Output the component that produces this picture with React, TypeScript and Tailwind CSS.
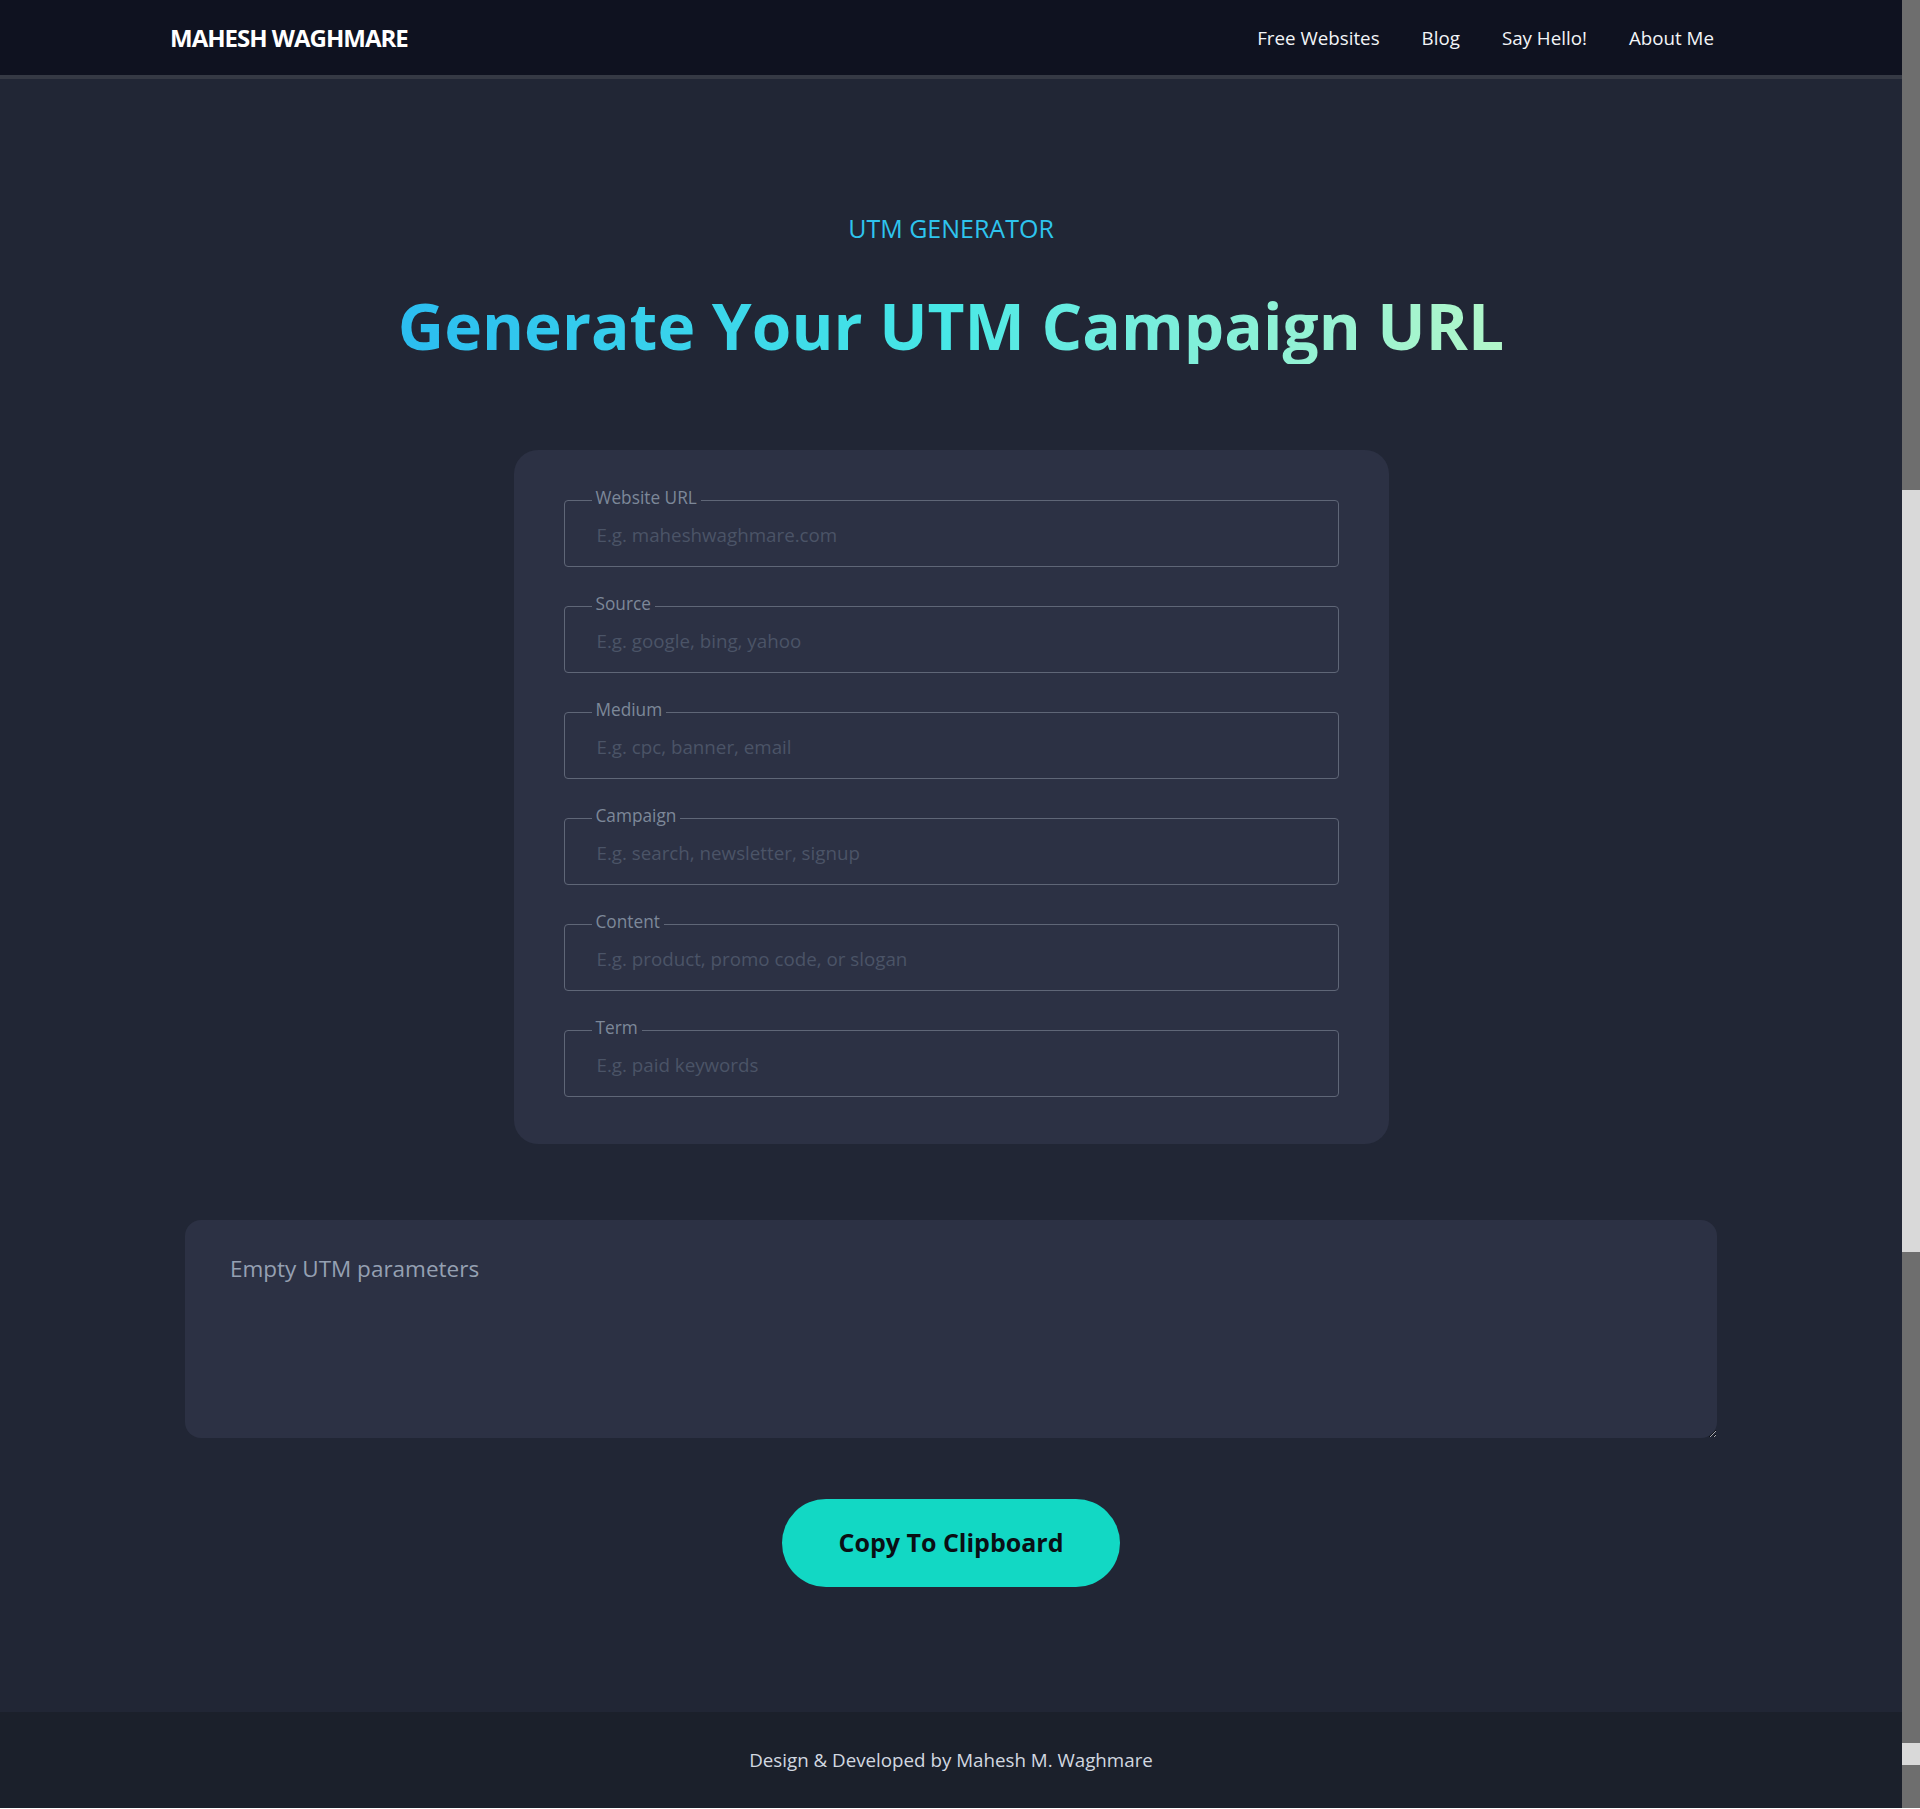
import React from "react";

const fields = [
  { label: "Website URL", placeholder: "E.g. maheshwaghmare.com" },
  { label: "Source", placeholder: "E.g. google, bing, yahoo" },
  { label: "Medium", placeholder: "E.g. cpc, banner, email" },
  { label: "Campaign", placeholder: "E.g. search, newsletter, signup" },
  { label: "Content", placeholder: "E.g. product, promo code, or slogan" },
  { label: "Term", placeholder: "E.g. paid keywords" },
];

const navItems = ["Free Websites", "Blog", "Say Hello!", "About Me"];

export default function App() {
  return (
    <div className="flex w-full font-['Open_Sans',sans-serif] bg-[#212635]">
      <div className="flex-1 flex flex-col min-w-0">
        <header className="h-[79px] bg-[#0f1220] border-b-4 border-[#353944] flex items-center">
          <div className="w-full pl-[170px] pr-[167px] flex items-center justify-between">
            <div className="text-white font-bold text-[24px] tracking-[-1px] leading-none">
              MAHESH WAGHMARE
            </div>
            <nav className="flex items-center">
              {navItems.map((item) => (
                <a
                  key={item}
                  href="#"
                  className="px-[21px] text-[18.75px] text-[#f3f5f8] leading-[24px] pt-[1px]"
                >
                  {item}
                </a>
              ))}
            </nav>
          </div>
        </header>

        <main className="flex flex-col items-center pt-[131px] pb-[125px]">
          <div className="text-[25px] leading-[36px] text-[#2ec4ee]">UTM GENERATOR</div>
          <h1 className="mt-[41px] text-[64px] leading-[77px] font-bold bg-gradient-to-r from-[#2bbdf0] via-[#48e8e6] to-[#b2f7c9] bg-clip-text text-transparent">
            Generate Your UTM Campaign URL
          </h1>

          <div className="mt-[86px] w-[875px] bg-[#2c3144] rounded-3xl px-[50px] pt-[37px] pb-[47px] flex flex-col gap-[26px]">
            {fields.map((f) => (
              <fieldset
                key={f.label}
                className="border border-[#5f6677] rounded-[4px] px-[27px]"
              >
                <legend className="px-[4px] pb-[4px] text-[17.25px] leading-[22px] text-[#7d8899]">
                  {f.label}
                </legend>
                <input
                  type="text"
                  placeholder={f.placeholder}
                  className="block w-full h-[42px] mb-[11px] pl-[5px] bg-transparent outline-none text-[18.75px] text-[#c9d1dc] placeholder:text-[#4b5467]"
                />
              </fieldset>
            ))}
          </div>

          <div className="mt-[76px] w-full px-[185px]">
            <textarea
              readOnly
              defaultValue="Empty UTM parameters"
              className="block w-full h-[218px] bg-[#2c3144] rounded-2xl pt-[32px] pl-[45px] pr-[39px] text-[22.5px] leading-[33px] text-[#95a0b2] outline-none"
            />
          </div>

          <button className="mt-[61px] w-[338px] h-[88px] rounded-full bg-[#12d8c4] text-[#0a0f14] text-[25px] font-bold">
            Copy To Clipboard
          </button>
        </main>

        <footer className="h-[96px] bg-[#1b202b] flex items-center justify-center">
          <span className="text-[18.75px] text-[#d2d8e0]">Design &amp; Developed by Mahesh M. Waghmare</span>
        </footer>
      </div>

      <div className="w-[18px] shrink-0 flex flex-col bg-[#6e6e6e]">
        <div className="h-[490px]" />
        <div className="h-[762px] bg-[#d9d9d9]" />
        <div className="h-[491px]" />
        <div className="h-[22px] bg-[#d9d9d9]" />
        <div className="flex-1" />
      </div>
    </div>
  );
}
